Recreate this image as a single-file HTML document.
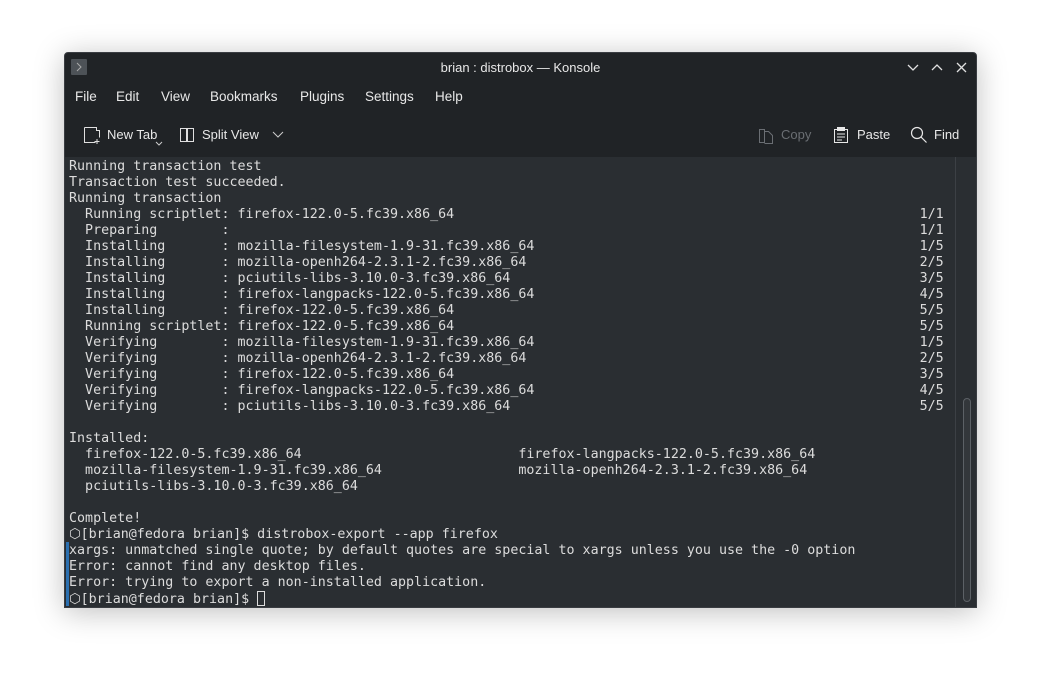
<!DOCTYPE html>
<html><head><style>
*{margin:0;padding:0;box-sizing:border-box}
body{width:1041px;height:684px;background:#fff;position:relative;overflow:hidden;font-family:"Liberation Sans","DejaVu Sans",sans-serif}
.win{position:absolute;left:64px;top:52px;width:913px;height:556px;background:#202326;border:1px solid #3a3d42;border-radius:4px 4px 0 0;box-shadow:0 4px 30px rgba(0,0,0,.25);overflow:hidden}
.title{position:absolute;left:0;top:0;width:100%;height:30px;color:#e8e8e8;font-size:13px;text-align:center;line-height:30px}
.menu{position:absolute;top:36px;left:10px;font-size:13.5px;color:#e8e8e8}
.menu span{position:absolute;white-space:nowrap}
.tb{position:absolute;top:74px;font-size:13px;color:#e8e8e8;white-space:nowrap}
.term{position:absolute;left:0;top:104px;width:890px;height:452px;background:#2a2e32}
.sb{position:absolute;left:890px;top:104px;width:23px;height:452px;background:#2a2e32;border-left:1px solid #3c4045}
.thumb{position:absolute;left:7px;top:241px;width:8px;height:204px;border:1px solid #5c6166;border-radius:4px;background:#33373b}
pre{position:absolute;left:4px;top:2px;font-family:"DejaVu Sans Mono","Liberation Mono",monospace;font-size:13.33px;line-height:16px;color:#dcdcdc}
.bar{position:absolute;left:1px;top:385px;width:3px;height:64px;background:#2a6fb0}
</style></head><body>
<div class="win">
 <div style="position:absolute;left:6px;top:6px;width:16px;height:16px;background:#4d5257;border-radius:1px"><svg width="16" height="16"><path d="M6 4l4 4-4 4" stroke="#aaa" fill="none"/></svg></div>
 <div class="title">brian : distrobox — Konsole</div>
 <svg style="position:absolute;left:842px;top:8px" width="62" height="14" stroke="#e0e0e0" fill="none" stroke-width="1.3"><path d="M1 4l5 5 5-5"/><path d="M25 9l5-5 5 5"/><path d="M50 2l9 9M59 2l-9 9"/></svg>
 <div class="menu"><span style="left:0">File</span><span style="left:41px">Edit</span><span style="left:86px">View</span><span style="left:135px">Bookmarks</span><span style="left:225px">Plugins</span><span style="left:290px">Settings</span><span style="left:360px">Help</span></div>
 <svg style="position:absolute;left:18px;top:73px" width="18" height="18" stroke="#e0e0e0" fill="none"><path d="M1.5 1.5h12v3h3v7M1.5 1.5v15h11"/><path d="M14 13v5M11.5 15.5h5"/></svg>
 <div class="tb" style="left:42px">New Tab</div>
 <svg style="position:absolute;left:90px;top:88px" width="8" height="6" stroke="#ccc" fill="none"><path d="M1 1l3 3 3-3"/></svg>
 <svg style="position:absolute;left:114px;top:74px" width="16" height="16" stroke="#e0e0e0" fill="none"><rect x="1.5" y="1.5" width="6" height="13"/><rect x="8.5" y="1.5" width="6" height="13"/></svg>
 <div class="tb" style="left:137px">Split View</div>
 <svg style="position:absolute;left:207px;top:78px" width="12" height="8" stroke="#ccc" fill="none"><path d="M1 1l5 5 5-5"/></svg>
 <svg style="position:absolute;left:693px;top:74px" width="16" height="17" stroke="#6a6e73" fill="none"><path d="M1.5 2.5h5v13h-5zM6.5 4.5h4l4 4v8h-8"/></svg>
 <div class="tb" style="left:716px;color:#6a6e73">Copy</div>
 <svg style="position:absolute;left:768px;top:73px" width="16" height="18" stroke="#e8e8e8" fill="none"><rect x="1.5" y="3.5" width="13" height="13"/><rect x="4.5" y="1.5" width="7" height="3" fill="#e8e8e8"/><path d="M4 8h8M4 11h8M4 14h5"/></svg>
 <div class="tb" style="left:792px">Paste</div>
 <svg style="position:absolute;left:845px;top:73px" width="18" height="18" stroke="#e8e8e8" fill="none" stroke-width="1.2"><circle cx="7" cy="7" r="5.5"/><path d="M11 11l5.5 5.5"/></svg>
 <div class="tb" style="left:869px">Find</div>
 <div class="term"><div class="bar"></div><pre>Running transaction test
Transaction test succeeded.
Running transaction
  Running scriptlet: firefox-122.0-5.fc39.x86_64                                                          1/1
  Preparing        :                                                                                      1/1
  Installing       : mozilla-filesystem-1.9-31.fc39.x86_64                                                1/5
  Installing       : mozilla-openh264-2.3.1-2.fc39.x86_64                                                 2/5
  Installing       : pciutils-libs-3.10.0-3.fc39.x86_64                                                   3/5
  Installing       : firefox-langpacks-122.0-5.fc39.x86_64                                                4/5
  Installing       : firefox-122.0-5.fc39.x86_64                                                          5/5
  Running scriptlet: firefox-122.0-5.fc39.x86_64                                                          5/5
  Verifying        : mozilla-filesystem-1.9-31.fc39.x86_64                                                1/5
  Verifying        : mozilla-openh264-2.3.1-2.fc39.x86_64                                                 2/5
  Verifying        : firefox-122.0-5.fc39.x86_64                                                          3/5
  Verifying        : firefox-langpacks-122.0-5.fc39.x86_64                                                4/5
  Verifying        : pciutils-libs-3.10.0-3.fc39.x86_64                                                   5/5

Installed:
  firefox-122.0-5.fc39.x86_64                           firefox-langpacks-122.0-5.fc39.x86_64
  mozilla-filesystem-1.9-31.fc39.x86_64                 mozilla-openh264-2.3.1-2.fc39.x86_64
  pciutils-libs-3.10.0-3.fc39.x86_64

Complete!
⬡[brian@fedora brian]$ distrobox-export --app firefox
xargs: unmatched single quote; by default quotes are special to xargs unless you use the -0 option
Error: cannot find any desktop files.
Error: trying to export a non-installed application.
⬡[brian@fedora brian]$ <span style="display:inline-block;width:8px;height:15px;border:1px solid #dcdcdc;vertical-align:-3px"></span></pre></div>
 <div class="sb"><div class="thumb"></div></div>
</div>
</body></html>
